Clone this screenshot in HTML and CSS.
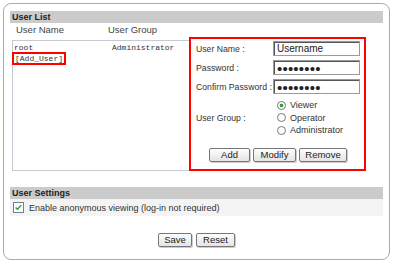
FILE: index.html
```html
<!DOCTYPE html>
<html lang="en">
<head>
    <meta charset="UTF-8">
    <meta name="viewport" content="width=device-width, initial-scale=1.0">
    <title>User Management</title>
    <link rel="stylesheet" href="styles.css">
</head>
<body>
    <div class="panel">
        <section class="group">
            <h2 class="group-title">User List</h2>
            <div class="col-heads">
                <span class="col-name">User Name</span>
                <span class="col-group">User Group</span>
            </div>
            <div class="user-row">
                <div class="user-box">
                    <div class="user-line">
                        <span class="uname">root</span>
                        <span class="ugroup">Administrator</span>
                    </div>
                    <div class="user-line">
                        <span class="uname add-user">[Add_User]</span>
                    </div>
                </div>

                <form class="user-form" onsubmit="return false">
                    <div class="form-row">
                        <label class="form-label" for="userName">User Name :</label>
                        <input type="text" id="userName" class="form-input" value="Username">
                    </div>
                    <div class="form-row">
                        <label class="form-label" for="userPass">Password :</label>
                        <input type="password" id="userPass" class="form-input pass-input" value="password">
                    </div>
                    <div class="form-row">
                        <label class="form-label" for="userPass2">Confirm Password :</label>
                        <input type="password" id="userPass2" class="form-input pass-input" value="password">
                    </div>
                    <div class="form-row group-row">
                        <span class="form-label">User Group :</span>
                        <div class="radio-list">
                            <label class="radio-item"><input type="radio" name="group" class="radio" checked> Viewer</label>
                            <label class="radio-item"><input type="radio" name="group" class="radio"> Operator</label>
                            <label class="radio-item"><input type="radio" name="group" class="radio"> Administrator</label>
                        </div>
                    </div>
                    <div class="form-buttons">
                        <button type="button" class="btn btn-add">Add</button>
                        <button type="button" class="btn btn-modify">Modify</button>
                        <button type="button" class="btn btn-remove">Remove</button>
                    </div>
                </form>
            </div>
        </section>

        <section class="group settings">
            <h2 class="group-title">User Settings</h2>
            <label class="check-row">
                <span class="check-box">
                    <svg width="9" height="9" viewBox="0 0 9 9">
                        <path d="M1.6 4.4 L3.5 6.3 L7.3 2.1" fill="none" stroke="#2f9a2f" stroke-width="1.4"/>
                    </svg>
                </span>
                Enable anonymous viewing (log-in not required)
            </label>
        </section>

        <div class="actions">
            <button type="button" class="btn btn-save">Save</button>
            <button type="button" class="btn btn-reset">Reset</button>
        </div>
    </div>
</body>
</html>
```

FILE: styles.css
```css
body {
    margin: 0;
    padding: 0;
    background-color: #fff;
    font-family: 'Liberation Sans', Arial, sans-serif;
    font-size: 9px;
    color: #333;
}

.panel {
    margin: 3px;
    width: 387px;
    height: 257px;
    border: 1px solid #aaa;
    border-radius: 8px;
    padding: 7px 6px 0 6px;
    box-sizing: border-box;
}

.group-title {
    margin: 0;
    height: 12px;
    line-height: 12px;
    padding-left: 2px;
    background-color: #cbcbcb;
    font-size: 9px;
    font-weight: bold;
    color: #222;
}

.col-heads {
    display: flex;
    height: 14px;
    line-height: 14px;
    font-size: 9.5px;
    color: #444;
}

.col-name {
    margin-left: 6px;
    width: 92px;
}

.user-row {
    display: flex;
    align-items: flex-end;
    margin-left: 2px;
}

.user-box {
    width: 177px;
    height: 131px;
    border: 1px solid #c6cad2;
    border-right: none;
    box-sizing: border-box;
    padding: 2px 0 0 1px;
    font-family: 'Liberation Mono', 'Courier New', monospace;
    font-size: 8px;
    color: #333;
}

.user-line {
    display: flex;
    height: 10px;
    line-height: 10px;
}

.uname {
    width: 98px;
}

.add-user {
    width: auto;
    outline: 2px solid #f00;
    padding: 0 1px;
    margin-top: 1px;
}

.user-form {
    width: 177px;
    height: 134px;
    margin: 0;
    border: 2px solid #f00;
    box-sizing: border-box;
    padding: 2px 4px 0 5px;
    display: flex;
    flex-direction: column;
    gap: 4px;
}

.form-row {
    display: flex;
    align-items: center;
}

.form-label {
    width: 78px;
    white-space: nowrap;
    font-size: 8.7px;
    color: #333;
}

.form-input {
    width: 87px;
    height: 15px;
    margin: 0;
    padding: 0 3px;
    box-sizing: border-box;
    border: 1px solid #9a9a9a;
    box-shadow: inset 1px 1px 0 #555;
    font-family: 'Liberation Sans', Arial, sans-serif;
    font-size: 10px;
    color: #222;
}

.pass-input {
    font-size: 15px;
    letter-spacing: 0.2px;
    padding-top: 1px;
}

.group-row {
    margin-top: 1px;
}

.radio-list {
    display: flex;
    flex-direction: column;
}

.radio-item {
    display: flex;
    align-items: center;
    height: 12.5px;
    margin-left: 3px;
}

.radio {
    appearance: none;
    width: 9px;
    height: 9px;
    margin: 0 4px 0 0;
    border: 1px solid #777;
    border-radius: 50%;
    background-color: #fff;
    box-sizing: border-box;
}

.radio:checked {
    background: radial-gradient(circle, #3c9a3c 0, #3c9a3c 1.6px, #fff 2.2px);
}

.form-buttons {
    display: flex;
    justify-content: center;
    gap: 3px;
    margin-top: 7px;
}

.btn {
    height: 14px;
    padding: 0;
    border: 1px solid #777;
    border-radius: 2px;
    background: linear-gradient(#fdfdfd, #e4e4e4);
    box-shadow: 1px 1px 0 #ccc;
    font-family: 'Liberation Sans', Arial, sans-serif;
    font-size: 9.5px;
    line-height: 12px;
    color: #222;
    cursor: pointer;
}

.btn-add { width: 41px; }
.btn-modify { width: 43px; }
.btn-remove { width: 48px; }
.btn-save { width: 34px; }
.btn-reset { width: 39px; }

.settings {
    margin-top: 16px;
}

.check-row {
    display: flex;
    align-items: center;
    height: 17px;
    padding-left: 3px;
    background-color: #f4f4f4;
    color: #333;
}

.check-box {
    display: inline-flex;
    width: 9px;
    height: 9px;
    margin-right: 5px;
    border: 1px solid #6d7f95;
    background-color: #fff;
}

.actions {
    display: flex;
    justify-content: center;
    gap: 4px;
    margin-top: 17px;
}
```
